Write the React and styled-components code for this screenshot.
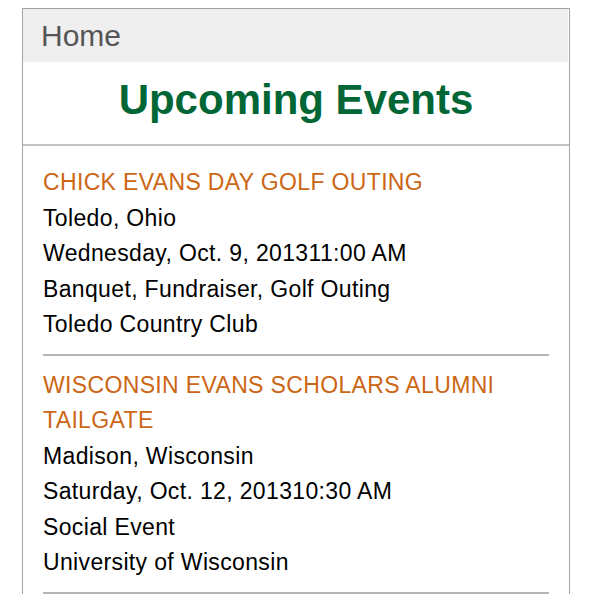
import React from "react";
import styled, { createGlobalStyle } from "styled-components";

const GlobalStyle = createGlobalStyle`
  html, body {
    margin: 0;
    padding: 0;
    background: #fff;
    font-family: "Liberation Sans", Arial, sans-serif;
  }
`;

const Page = styled.div`
  padding: 8px 0 0 22px;
`;

const Panel = styled.div`
  width: 546px;
  border: 1px solid #a3a3a3;
  border-bottom: none;
  background: #fff;
`;

const Breadcrumb = styled.div`
  height: 53px;
  margin-right: 1px;
  background: #efefef;
  padding-left: 18px;
  font-size: 30px;
  line-height: 53px;
  color: #555;
`;

const Heading = styled.h1`
  margin: 0;
  padding: 14px 0 20px;
  border-bottom: 2px solid #c2c2c2;
  text-align: center;
  font-size: 42px;
  line-height: 48px;
  font-weight: bold;
  color: #006636;
`;

const EventList = styled.div`
  padding: 7px 20px 0 20px;
`;

const Event = styled.div`
  padding: 12px 0 11px;
  border-bottom: 2px solid #b5b5b5;
  font-size: 23px;
  line-height: 35.5px;
  letter-spacing: 0.35px;
  color: #000;
`;

const EventTitle = styled.div`
  color: #cc6614;
`;

const Line = styled.div``;

const events = [
  {
    title: "CHICK EVANS DAY GOLF OUTING",
    place: "Toledo, Ohio",
    date: "Wednesday, Oct. 9, 2013",
    time: "11:00 AM",
    type: "Banquet, Fundraiser, Golf Outing",
    venue: "Toledo Country Club",
  },
  {
    title: "WISCONSIN EVANS SCHOLARS ALUMNI TAILGATE",
    place: "Madison, Wisconsin",
    date: "Saturday, Oct. 12, 2013",
    time: "10:30 AM",
    type: "Social Event",
    venue: "University of Wisconsin",
  },
];

export default function App() {
  return (
    <Page>
      <GlobalStyle />
      <Panel>
        <Breadcrumb>Home</Breadcrumb>
        <Heading>Upcoming Events</Heading>
        <EventList>
          {events.map((ev) => (
            <Event key={ev.title}>
              <EventTitle>{ev.title}</EventTitle>
              <Line>{ev.place}</Line>
              <Line>
                {ev.date}
                {ev.time}
              </Line>
              <Line>{ev.type}</Line>
              <Line>{ev.venue}</Line>
            </Event>
          ))}
        </EventList>
      </Panel>
    </Page>
  );
}
